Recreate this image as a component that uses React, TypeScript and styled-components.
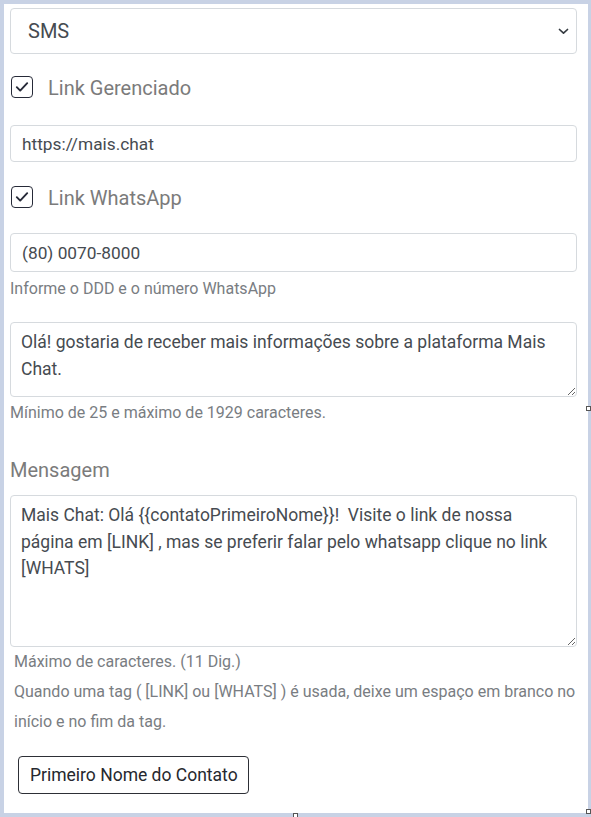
import React from "react";
import styled, { createGlobalStyle } from "styled-components";

const Global = createGlobalStyle`
  html, body { margin: 0; padding: 0; }
  body {
    background: #c8d2e5;
    font-family: Roboto, "Noto Sans", "Liberation Sans", sans-serif;
    width: 591px;
    height: 817px;
    overflow: hidden;
  }
  * { box-sizing: border-box; }
`;

const Page = styled.div`
  position: relative;
  padding: 4px 3px 4px 4px;
`;

const Panel = styled.div`
  position: relative;
  background: #ffffff;
  padding: 4px 11px 19px 6px;
  display: flex;
  flex-direction: column;
`;

const Handle = styled.span<{ $x: number; $y: number }>`
  position: absolute;
  left: ${(p) => p.$x}px;
  top: ${(p) => p.$y}px;
  width: 5px;
  height: 5px;
  background: #fff;
  border: 1px solid #555;
`;

const SelectBox = styled.div`
  height: 46px;
  border: 1px solid #d6dade;
  border-radius: 4px;
  display: flex;
  align-items: center;
  justify-content: space-between;
  padding: 0 7px 0 17px;
  font-size: 20px;
  color: #464b51;
  margin-bottom: 22px;
`;

const CheckRow = styled.label<{ $mb: number }>`
  display: flex;
  align-items: center;
  gap: 15px;
  height: 22px;
  margin-bottom: ${(p) => p.$mb}px;
  font-size: 20px;
  color: #7b7b7b;
`;

const Box = styled.span`
  width: 22px;
  height: 22px;
  margin-left: 1px;
  border: 1.5px solid #262a38;
  border-radius: 4px;
  display: flex;
  align-items: center;
  justify-content: center;
  flex: none;
`;

const Label = styled.span`
  position: relative;
  top: 1px;
`;

const Input = styled.div<{ $h: number; $mb: number }>`
  height: ${(p) => p.$h}px;
  border: 1px solid #d6dade;
  border-radius: 4px;
  display: flex;
  align-items: center;
  padding: 0 11px;
  font-size: 17.3px;
  color: #464b51;
  margin-bottom: ${(p) => p.$mb}px;
`;

const Help = styled.div<{ $mb: number; $lh?: number; $pl?: number }>`
  font-size: 16px;
  line-height: ${(p) => p.$lh ?? 24}px;
  color: #797d82;
  padding-left: ${(p) => p.$pl ?? 0}px;
  margin-right: -6px;
  margin-bottom: ${(p) => p.$mb}px;
`;

const Area = styled.textarea<{ $h: number; $mb: number }>`
  display: block;
  width: 100%;
  height: ${(p) => p.$h}px;
  border: 1px solid #d6dade;
  border-radius: 4px;
  padding: 6px 14px 4px 10px;
  font-family: Roboto, "Noto Sans", "Liberation Sans", sans-serif;
  font-size: 17.5px;
  line-height: 26.5px;
  color: #464b51;
  resize: vertical;
  outline: none;
  overflow: hidden;
  margin: 0 0 ${(p) => p.$mb}px 0;
`;

const Heading = styled.div`
  font-size: 20px;
  line-height: 24px;
  color: #7b7b7b;
  margin-bottom: 13px;
`;

const Button = styled.button`
  align-self: flex-start;
  margin-left: 8px;
  height: 38px;
  padding: 0 10px 0 11px;
  background: #fff;
  border: 1px solid #2d2f36;
  border-radius: 4px;
  font-family: Roboto, "Noto Sans", "Liberation Sans", sans-serif;
  font-size: 17.5px;
  color: #26282e;
`;

const Check = () => (
  <svg width="14" height="12" viewBox="0 0 14 12">
    <path d="M1.8 6.2 L5.2 9.6 L12.2 2.2" fill="none" stroke="#262a38" strokeWidth="1.9" strokeLinecap="round" strokeLinejoin="round" />
  </svg>
);

const Chevron = () => (
  <svg width="11" height="7" viewBox="0 0 11 7">
    <path d="M1.5 1.5 L5.5 5.2 L9.5 1.5" fill="none" stroke="#343a40" strokeWidth="1.7" strokeLinecap="round" strokeLinejoin="round" />
  </svg>
);

export default function App() {
  return (
    <Page>
      <Global />
      <Panel>
        <SelectBox>
          <span>SMS</span>
          <Chevron />
        </SelectBox>
        <CheckRow $mb={27}>
          <Box><Check /></Box>
          <Label>Link Gerenciado</Label>
        </CheckRow>
        <Input $h={37} $mb={24}>https://mais.chat</Input>
        <CheckRow $mb={25}>
          <Box><Check /></Box>
          <Label>Link WhatsApp</Label>
        </CheckRow>
        <Input $h={39} $mb={5}>(80) 0070-8000</Input>
        <Help $mb={21}>Informe o DDD e o número WhatsApp</Help>
        <Area
          $h={75}
          $mb={4}
          readOnly
          defaultValue="Olá! gostaria de receber mais informações sobre a plataforma Mais Chat."
        />
        <Help $mb={33}>Mínimo de 25 e máximo de 1929 caracteres.</Help>
        <Heading>Mensagem</Heading>
        <Area
          $h={152}
          $mb={0}
          readOnly
          defaultValue="Mais Chat: Olá {{contatoPrimeiroNome}}!  Visite o link de nossa página em [LINK] , mas se preferir falar pelo whatsapp clique no link [WHATS]"
        />
        <Help $mb={19} $lh={30} $pl={4}>
          Máximo de caracteres. (11 Dig.)
          <br />
          Quando uma tag ( [LINK] ou [WHATS] ) é usada, deixe um espaço em branco no início e no fim da tag.
        </Help>
        <Button>Primeiro Nome do Contato</Button>
      </Panel>
      <Handle $x={586} $y={406} />
      <Handle $x={293} $y={813} />
      <Handle $x={586} $y={809} />
    </Page>
  );
}
